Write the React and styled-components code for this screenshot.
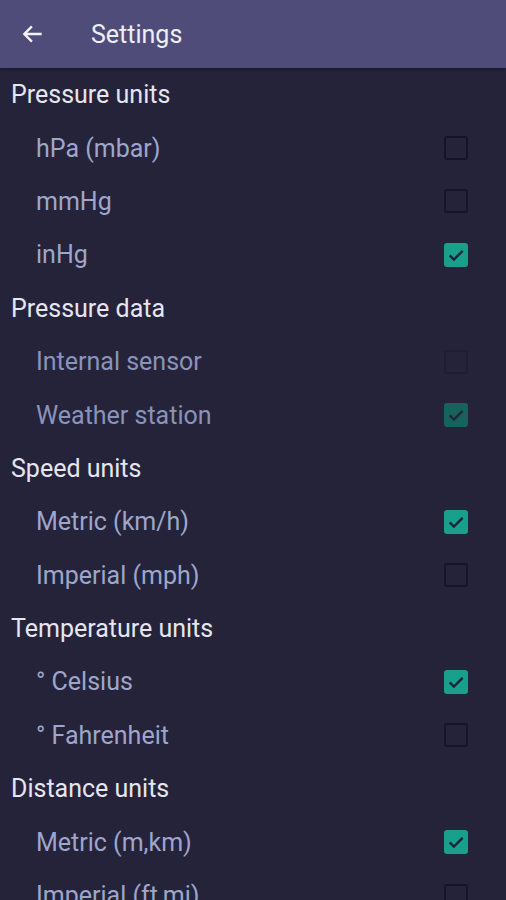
import styled, { createGlobalStyle } from 'styled-components';

const GlobalStyle = createGlobalStyle`
  body {
    margin: 0;
    background: #25233a;
    font-family: Roboto, 'Liberation Sans', sans-serif;
  }
`;

const Page = styled.div`
  width: 506px;
  height: 900px;
  overflow: hidden;
  background: #25233a;
`;

const TopBar = styled.header`
  height: 68px;
  background: #504c7a;
  display: flex;
  align-items: center;
  padding-left: 20px;
  gap: 45px;
  box-shadow: 0 1px 3px rgba(0, 0, 0, 0.4);
  position: relative;
`;

const Title = styled.h1`
  margin: 0;
  font-size: 25px;
  font-weight: 400;
  color: #eeeef6;
`;

const SectionTitle = styled.div`
  height: 53.4px;
  display: flex;
  align-items: center;
  padding-left: 11px;
  font-size: 25px;
  color: #e6e6ef;
`;

const Row = styled.div`
  height: 53.4px;
  display: flex;
  align-items: center;
  justify-content: space-between;
  padding-left: 36px;
  padding-right: 38px;
  font-size: 25px;
  color: ${(p) => (p.disabled ? '#8a93b9' : '#9ea6cc')};
`;

const Box = styled.span`
  width: 24px;
  height: 24px;
  flex-shrink: 0;
  box-sizing: border-box;
  border-radius: 3px;
  display: flex;
  align-items: center;
  justify-content: center;
  background: ${(p) => (p.checked ? (p.disabled ? '#17625c' : '#18a08c') : 'transparent')};
  border: ${(p) => (p.checked ? 'none' : `2px solid ${p.disabled ? '#1f1d32' : '#15142a'}`)};
`;

const sections = [
  {
    title: 'Pressure units',
    items: [
      { label: 'hPa (mbar)' },
      { label: 'mmHg' },
      { label: 'inHg', checked: true },
    ],
  },
  {
    title: 'Pressure data',
    disabled: true,
    items: [
      { label: 'Internal sensor' },
      { label: 'Weather station', checked: true },
    ],
  },
  {
    title: 'Speed units',
    items: [
      { label: 'Metric (km/h)', checked: true },
      { label: 'Imperial (mph)' },
    ],
  },
  {
    title: 'Temperature units',
    items: [
      { label: '° Celsius', checked: true },
      { label: '° Fahrenheit' },
    ],
  },
  {
    title: 'Distance units',
    items: [
      { label: 'Metric (m,km)', checked: true },
      { label: 'Imperial (ft,mi)' },
    ],
  },
];

const Check = ({ checked, disabled }) => (
  <Box checked={checked} disabled={disabled}>
    {checked && (
      <svg width="20" height="20" viewBox="0 0 24 24" fill="none">
        <path d="M4.5 12.5l5 5L20 7" stroke={disabled ? '#1d2a36' : '#1f2237'} strokeWidth="2.8" />
      </svg>
    )}
  </Box>
);

const App = () => {
  return (
    <Page>
      <GlobalStyle />
      <TopBar>
        <svg width="26" height="26" viewBox="0 0 24 24" fill="none">
          <path d="M20 12H4M11 5l-7 7 7 7" stroke="#f2f2f8" strokeWidth="2.2" />
        </svg>
        <Title>Settings</Title>
      </TopBar>
      {sections.map((s) => (
        <div key={s.title}>
          <SectionTitle>{s.title}</SectionTitle>
          {s.items.map((item) => (
            <Row key={item.label} disabled={s.disabled}>
              <span>{item.label}</span>
              <Check checked={item.checked} disabled={s.disabled} />
            </Row>
          ))}
        </div>
      ))}
    </Page>
  );
};

export default App;
